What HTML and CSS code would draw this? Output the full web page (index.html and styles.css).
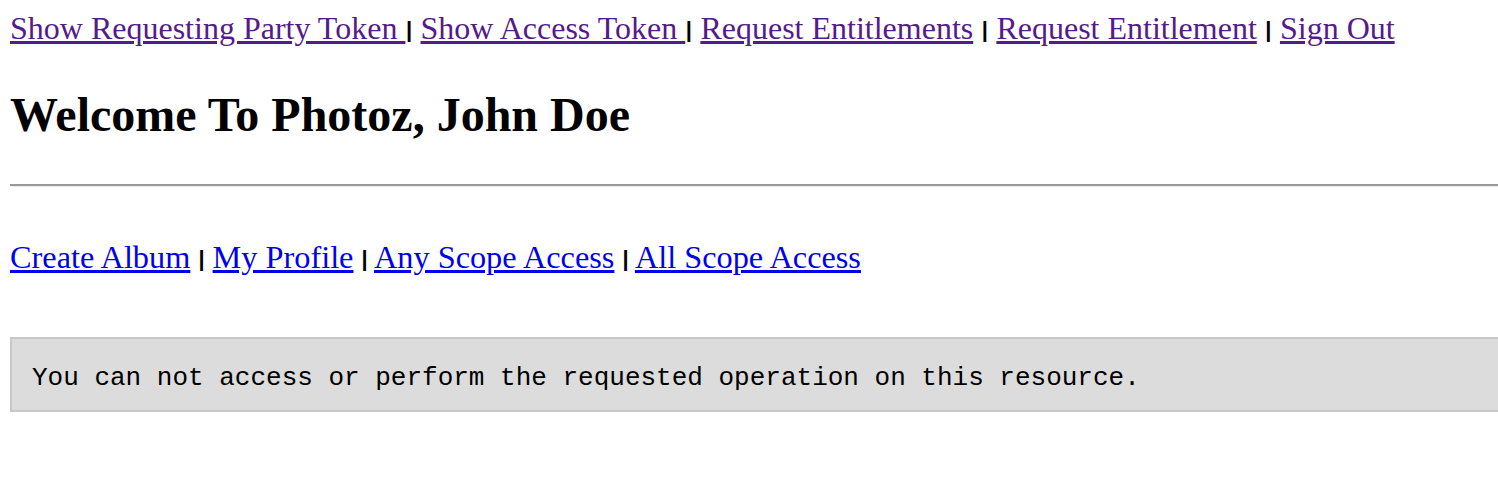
FILE: index.html
```html
<!DOCTYPE html>
<html>
<head>
<meta charset="utf-8">
<title>Photoz</title>
<link rel="stylesheet" href="styles.css">
</head>
<body>
<div class="topnav">
  <a class="visited" href="#">Show Requesting Party Token </a> <span class="sep">|</span>
  <a class="visited" href="#">Show Access Token </a> <span class="sep">|</span>
  <a class="visited" href="#">Request Entitlements</a> <span class="sep">|</span>
  <a class="visited" href="#">Request Entitlement</a> <span class="sep">|</span>
  <a class="visited" href="#">Sign Out</a>
</div>
<h1 class="title">Welcome To Photoz, John Doe</h1>
<hr class="rule">
<div class="subnav">
  <a href="#">Create Album</a> <span class="sep">|</span>
  <a href="#">My Profile</a> <span class="sep">|</span>
  <a href="#">Any Scope Access</a> <span class="sep">|</span>
  <a href="#">All Scope Access</a>
</div>
<div class="message">You can not access or perform the requested operation on this resource.</div>
</body>
</html>
```
FILE: styles.css
```css
html, body {
  background: #ffffff;
}
body {
  margin: 10px 0 0 10px;
  font-family: "Liberation Serif", "Times New Roman", serif;
  font-size: 32px;
  color: #000;
  overflow: hidden;
}
a {
  color: #0000ee;
  text-decoration: underline;
}
a.visited {
  color: #551a8b;
}
.sep {
  display: inline-block;
  font-family: "Liberation Sans", Arial, sans-serif;
  font-size: 22px;
  font-weight: bold;
  color: #000;
  margin: 0 0.5px;
  vertical-align: 2px;
}
.topnav {
  line-height: 37px;
  white-space: nowrap;
}
.subnav .sep {
  margin: 0;
}
.title {
  font-size: 48px;
  font-weight: bold;
  margin: 40px 0 0 0;
  line-height: 54px;
}
.rule {
  margin: 42px 0 0 0;
  border: 0;
  border-top: 2px solid #9a9a9a;
  border-bottom: 1px solid #eeeeee;
  height: 0;
}
.subnav {
  margin-top: 52px;
  line-height: 37px;
  font-size: 32.3px;
  white-space: nowrap;
}
.message {
  margin-top: 60px;
  background: #dcdcdc;
  border: 2px solid #c8c8c8;
  border-right: 0;
  padding: 6px 0 0 20px;
  height: 65px;
  display: flex;
  align-items: center;
  font-family: "Liberation Mono", "Courier New", monospace;
  font-size: 26px;
  white-space: nowrap;
}
```
